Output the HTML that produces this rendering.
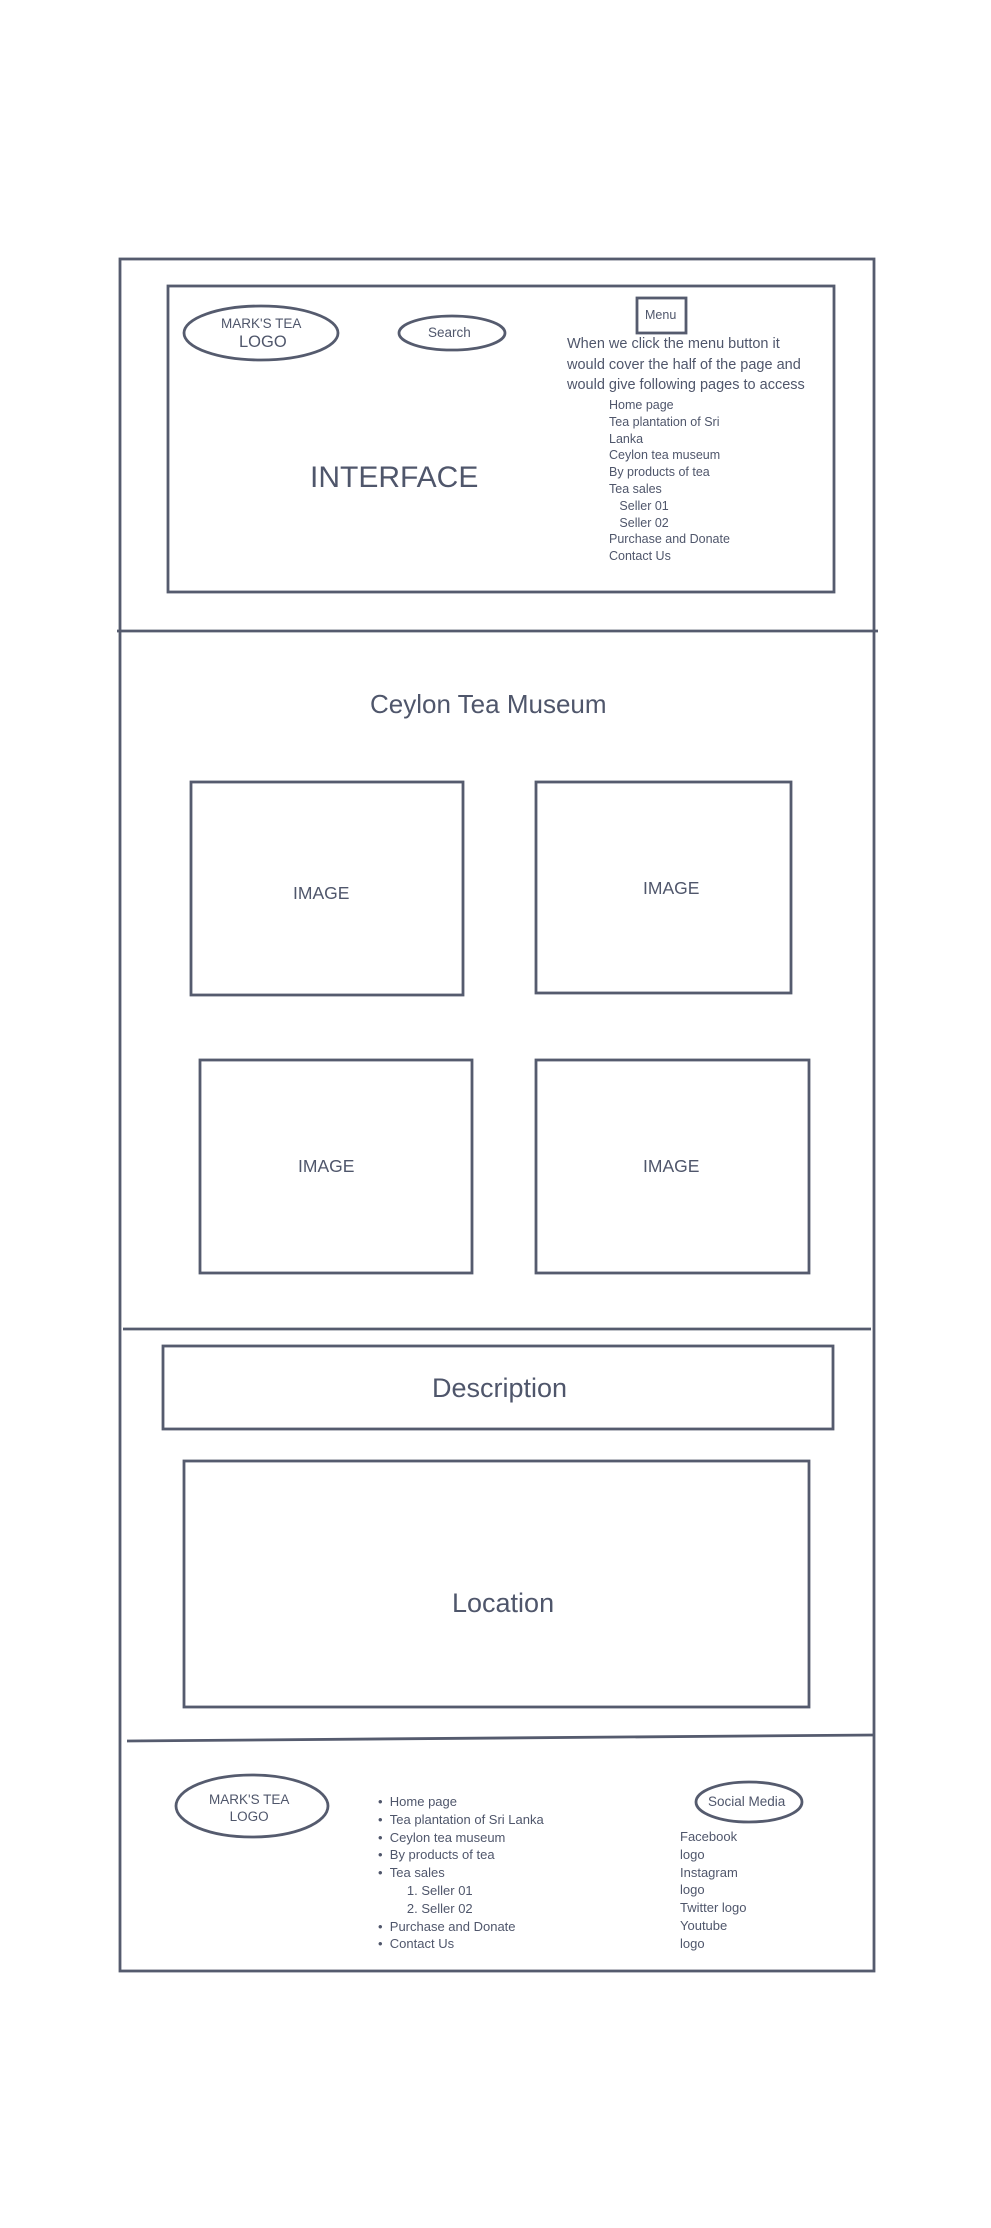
<!DOCTYPE html>
<html><head><meta charset="utf-8"><style>
html,body{margin:0;padding:0;background:#fff;}
body{width:991px;height:2228px;position:relative;overflow:hidden;font-family:"Liberation Sans",sans-serif;color:#4f566b;}
.t{position:absolute;white-space:nowrap;line-height:1;}
svg{position:absolute;left:0;top:0;}
</style></head><body>
<svg width="991" height="2228" fill="none" stroke="#555b6e" stroke-width="2.8">
<rect x="120" y="259" width="754" height="1712"/>
<rect x="168" y="286" width="666" height="306"/>
<ellipse cx="261" cy="333" rx="77" ry="27"/>
<ellipse cx="452" cy="333" rx="53" ry="17"/>
<rect x="637" y="298" width="49" height="35"/>
<line x1="117" y1="631" x2="878" y2="631"/>
<rect x="191" y="782" width="272" height="213"/>
<rect x="536" y="782" width="255" height="211"/>
<rect x="200" y="1060" width="272" height="213"/>
<rect x="536" y="1060" width="273" height="213"/>
<line x1="123" y1="1329" x2="871" y2="1329"/>
<rect x="163" y="1346" width="670" height="83"/>
<rect x="184" y="1461" width="625" height="246"/>
<line x1="127" y1="1741" x2="874" y2="1735"/>
<ellipse cx="252" cy="1806" rx="76" ry="31"/>
<ellipse cx="749" cy="1802" rx="53" ry="20"/>
</svg>

<div class="t" style="left:221px;top:317px;font-size:13.5px;">MARK'S TEA</div>
<div class="t" style="left:239px;top:334px;font-size:16.5px;">LOGO</div>
<div class="t" style="left:428px;top:326px;font-size:13.5px;">Search</div>
<div class="t" style="left:645px;top:309px;font-size:12.5px;">Menu</div>
<div class="t" style="left:567px;top:334px;font-size:14.5px;line-height:20.5px;">When we click the menu button it<br>would cover the half of the page and<br>would give following pages to access</div>
<div class="t" style="left:609px;top:397px;font-size:12.5px;line-height:16.8px;">Home page<br>Tea plantation of Sri<br>Lanka<br>Ceylon tea museum<br>By products of tea<br>Tea sales<br>&nbsp;&nbsp;&nbsp;Seller 01<br>&nbsp;&nbsp;&nbsp;Seller 02<br>Purchase and Donate<br>Contact Us</div>
<div class="t" style="left:310px;top:463px;font-size:30px;">INTERFACE</div>

<div class="t" style="left:370px;top:691px;font-size:26px;">Ceylon Tea Museum</div>
<div class="t" style="left:293px;top:885px;font-size:17.5px;">IMAGE</div>
<div class="t" style="left:643px;top:880px;font-size:17.5px;">IMAGE</div>
<div class="t" style="left:298px;top:1158px;font-size:17.5px;">IMAGE</div>
<div class="t" style="left:643px;top:1158px;font-size:17.5px;">IMAGE</div>

<div class="t" style="left:432px;top:1375px;font-size:27px;">Description</div>
<div class="t" style="left:452px;top:1590px;font-size:27px;">Location</div>

<div class="t" style="left:209px;top:1791px;font-size:13.5px;line-height:17px;text-align:center;">MARK'S TEA<br>LOGO</div>
<div class="t" style="left:378px;top:1793px;font-size:13px;line-height:17.8px;">•&nbsp;&nbsp;Home page<br>•&nbsp;&nbsp;Tea plantation of Sri Lanka<br>•&nbsp;&nbsp;Ceylon tea museum<br>•&nbsp;&nbsp;By products of tea<br>•&nbsp;&nbsp;Tea sales<br>&nbsp;&nbsp;&nbsp;&nbsp;&nbsp;&nbsp;&nbsp;&nbsp;1. Seller 01<br>&nbsp;&nbsp;&nbsp;&nbsp;&nbsp;&nbsp;&nbsp;&nbsp;2. Seller 02<br>•&nbsp;&nbsp;Purchase and Donate<br>•&nbsp;&nbsp;Contact Us</div>
<div class="t" style="left:708px;top:1795px;font-size:13.5px;">Social Media</div>
<div class="t" style="left:680px;top:1828px;font-size:13px;line-height:17.8px;">Facebook<br>logo<br>Instagram<br>logo<br>Twitter logo<br>Youtube<br>logo</div>
</body></html>
